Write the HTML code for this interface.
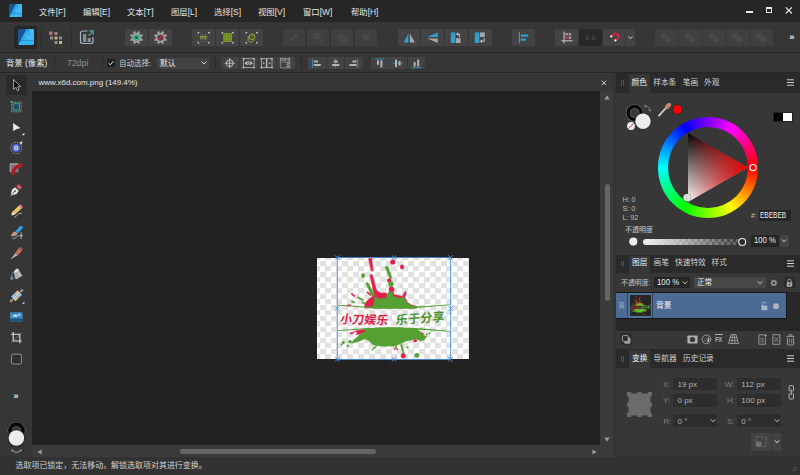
<!DOCTYPE html>
<html lang="zh">
<head>
<meta charset="utf-8">
<title>Affinity Designer</title>
<style>
*{box-sizing:border-box;margin:0;padding:0}
html,body{width:800px;height:475px;overflow:hidden;background:#363636;color:#d8d8d8;
font-family:"Liberation Sans","Noto Sans CJK SC",sans-serif;font-size:8.4px;line-height:1}
#app{position:relative;width:800px;height:475px;overflow:hidden;background:#363636}
#app div,#app span,#app svg{position:absolute}
.t{white-space:nowrap;line-height:12px;height:12px}
.btn{background:#434343;border-radius:1px}
.btnd{background:#3f3f3f;border-radius:1px}
.dark{background:#262626}
.field{background:#2b2b2b;border-radius:1px}
</style>
</head>
<body>
<div id="app">

<!-- title / menu bar -->
<div class="dark" style="left:0;top:0;width:800px;height:22px"></div>
<svg style="left:9px;top:4px" width="13" height="13" viewBox="0 0 16 16">
 <rect width="16" height="16" rx="0.8" fill="#1a5692"/>
 <path d="M0.3 16 L8.6 0 H15.2 A0.8 0.8 0 0 1 16 0.8 V15.2 A0.8 0.8 0 0 1 15.2 16 Z" fill="#36b6f4"/>
 <path d="M10.6 0 L4.6 11.6 M2.6 11.6 H16 M10.6 0.4 V7 M6.2 8.4 L9.2 12" stroke="#1c7cc6" stroke-width="0.8" fill="none"/>
 <path d="M4.6 11.6 L10.6 0 H16 V11.6 Z" fill="#5ccaff" opacity="0.25"/>
</svg>
<span class="t" style="left:39px;top:5.8px;color:#e4e4e4">文件[F]</span>
<span class="t" style="left:83px;top:5.8px;color:#e4e4e4">编辑[E]</span>
<span class="t" style="left:127px;top:5.8px;color:#e4e4e4">文本[T]</span>
<span class="t" style="left:171px;top:5.8px;color:#e4e4e4">图层[L]</span>
<span class="t" style="left:214px;top:5.8px;color:#e4e4e4">选择[S]</span>
<span class="t" style="left:258px;top:5.8px;color:#e4e4e4">视图[V]</span>
<span class="t" style="left:303px;top:5.8px;color:#e4e4e4">窗口[W]</span>
<span class="t" style="left:351px;top:5.8px;color:#e4e4e4">帮助[H]</span>
<!-- window controls -->
<div style="left:746px;top:11px;width:7px;height:2px;background:#e8e8e8"></div>
<div style="left:766px;top:7px;width:6px;height:6px;border:1px solid #e8e8e8;border-top-width:2px"></div>
<svg style="left:785px;top:7px" width="8" height="7" viewBox="0 0 8 7"><path d="M0.7 0.3 L7 6.5 M7 0.3 L0.7 6.5" stroke="#e8e8e8" stroke-width="1.1"/></svg>

<!-- main toolbar -->
<!-- persona buttons -->
<div style="left:14px;top:26px;width:23px;height:23px;background:#272727;border-radius:1px"></div>
<svg style="left:18px;top:29px" width="16" height="16" viewBox="0 0 16 16">
 <rect width="16" height="16" rx="1.4" fill="#1a5692"/>
 <path d="M0.3 16 L8.6 0 H14.6 A1.4 1.4 0 0 1 16 1.4 V14.6 A1.4 1.4 0 0 1 14.6 16 Z" fill="#36b6f4"/>
 <path d="M10.6 0 L4.6 11.6 M2.6 11.6 H16 M10.6 0.4 V7 M6.2 8.4 L9.2 12" stroke="#1c7cc6" stroke-width="0.75" fill="none"/>
 <path d="M4.6 11.6 L10.6 0 H16 V11.6 Z" fill="#5ccaff" opacity="0.25"/>
</svg>
<div style="left:41px;top:26px;width:1px;height:23px;background:#2b2b2b"></div>
<div style="left:71px;top:26px;width:1px;height:23px;background:#2b2b2b"></div>
<svg style="left:48.2px;top:29.8px" width="16" height="16" viewBox="0 0 16 16">
 <rect x="1" y="1.5" width="3.6" height="3.6" fill="#b06b6f"/>
 <rect x="6.5" y="2" width="3" height="3" fill="#8e8e8e"/>
 <rect x="2" y="6.5" width="3" height="3" fill="#8e8e8e"/>
 <rect x="6.5" y="6.5" width="3" height="3" fill="#c9b27c"/>
 <rect x="11" y="6.5" width="3" height="3" fill="#8e8e8e"/>
 <rect x="6.5" y="11" width="3" height="3" fill="#8e8e8e"/>
 <rect x="11" y="11" width="3" height="3" fill="#c9b27c"/>
</svg>
<svg style="left:79px;top:29px" width="16" height="16" viewBox="0 0 16 16">
 <path d="M8.5 2 H3.5 A2 2 0 0 0 1.5 4 V12.5 A2 2 0 0 0 3.5 14.5 H12 A2 2 0 0 0 14 12.5 V8" fill="none" stroke="#9fb4c8" stroke-width="1.2"/>
 <rect x="4" y="5" width="3.2" height="8" fill="#8f8f8f"/>
 <rect x="8.6" y="9" width="3.2" height="4" fill="#8f8f8f"/>
 <path d="M9.5 6.8 L14 2.3 M10.3 2 H14.3 V6" fill="none" stroke="#4f9c8c" stroke-width="1.3"/>
</svg>
<div class="btn" style="left:125px;top:29px;width:23px;height:17px"></div>
<div class="btn" style="left:149px;top:29px;width:23px;height:17px"></div>
<div class="btn" style="left:192px;top:29px;width:23px;height:17px"></div>
<div class="btn" style="left:216px;top:29px;width:23px;height:17px"></div>
<div class="btn" style="left:240px;top:29px;width:23px;height:17px"></div>
<div class="btnd" style="left:283px;top:29px;width:22px;height:17px"></div>
<div class="btnd" style="left:307px;top:29px;width:22px;height:17px"></div>
<div class="btnd" style="left:331px;top:29px;width:22px;height:17px"></div>
<div class="btnd" style="left:355px;top:29px;width:22px;height:17px"></div>
<div class="btn" style="left:397.5px;top:29px;width:22.5px;height:17px"></div>
<div class="btn" style="left:421.2px;top:29px;width:22.8px;height:17px"></div>
<div class="btn" style="left:445px;top:29px;width:22.8px;height:17px"></div>
<div class="btn" style="left:469px;top:29px;width:22.8px;height:17px"></div>
<div class="btn" style="left:512px;top:29px;width:23px;height:17px"></div>
<div class="btn" style="left:555px;top:29px;width:23px;height:17px"></div>
<div style="left:579px;top:29px;width:23px;height:17px;background:#282828;border-radius:1px"></div>
<div class="btn" style="left:602.5px;top:29px;width:22.5px;height:17px"></div>
<div class="btn" style="left:626px;top:29px;width:9px;height:17px"></div>
<div class="btnd" style="left:655px;top:29px;width:22.5px;height:17px"></div>
<div class="btnd" style="left:679px;top:29px;width:22.5px;height:17px"></div>
<div class="btnd" style="left:702.8px;top:29px;width:22.4px;height:17px"></div>
<div class="btnd" style="left:726.3px;top:29px;width:22.4px;height:17px"></div>
<div class="btnd" style="left:750.2px;top:29px;width:22.4px;height:17px"></div>

<!-- toolbar icons -->
<svg style="left:125px;top:29px" width="23" height="17" viewBox="0 0 23 17"><circle cx="11.5" cy="8.6" r="3.9" fill="none" stroke="#a2a2a2" stroke-width="1.9"/><circle cx="16.49" cy="10.67" r="1.25" fill="#a2a2a2"/><circle cx="13.57" cy="13.59" r="1.25" fill="#a2a2a2"/><circle cx="9.43" cy="13.59" r="1.25" fill="#a2a2a2"/><circle cx="6.51" cy="10.67" r="1.25" fill="#a2a2a2"/><circle cx="6.51" cy="6.53" r="1.25" fill="#a2a2a2"/><circle cx="9.43" cy="3.61" r="1.25" fill="#a2a2a2"/><circle cx="13.57" cy="3.61" r="1.25" fill="#a2a2a2"/><circle cx="16.49" cy="6.53" r="1.25" fill="#a2a2a2"/><circle cx="11.5" cy="8.6" r="2.2" fill="#434343" stroke="#27c483" stroke-width="1.5"/></svg>
<svg style="left:149px;top:29px" width="23" height="17" viewBox="0 0 23 17"><circle cx="11.5" cy="8.6" r="3.9" fill="none" stroke="#a2a2a2" stroke-width="1.9"/><circle cx="16.49" cy="10.67" r="1.25" fill="#a2a2a2"/><circle cx="13.57" cy="13.59" r="1.25" fill="#a2a2a2"/><circle cx="9.43" cy="13.59" r="1.25" fill="#a2a2a2"/><circle cx="6.51" cy="10.67" r="1.25" fill="#a2a2a2"/><circle cx="6.51" cy="6.53" r="1.25" fill="#a2a2a2"/><circle cx="9.43" cy="3.61" r="1.25" fill="#a2a2a2"/><circle cx="13.57" cy="3.61" r="1.25" fill="#a2a2a2"/><circle cx="16.49" cy="6.53" r="1.25" fill="#a2a2a2"/><circle cx="11.5" cy="8.6" r="2.9" fill="#434343"/><path d="M9 11.2 L14.1 6.1" stroke="#e0203f" stroke-width="1.6"/></svg>
<svg style="left:192px;top:29px" width="23" height="17" viewBox="0 0 23 17"><path d="M6 4.8 V3.5 H7.3 M16 3.5 H17.3 V4.8 M6 12.8 V14.1 H7.3 M16 14.1 H17.3 V12.8" fill="none" stroke="#e6e6e6" stroke-width="0.8"/><g stroke="#7c7c7c" stroke-width="0.55" stroke-dasharray="1 0.6"><path d="M8.2 5.6 H15.2"/><path d="M8.2 7.3 H15.2"/><path d="M8.2 9 H15.2"/><path d="M8.2 10.7 H15.2"/><path d="M8.2 12.4 H15.2"/></g><g stroke="#a8c832" stroke-width="1" stroke-dasharray="1.2 0.5"><path d="M8.2 7.3 H15.2"/><path d="M8.2 9 H15.2"/></g></svg>
<svg style="left:216px;top:29px" width="23" height="17" viewBox="0 0 23 17"><path d="M6 4.8 V3.5 H7.3 M16 3.5 H17.3 V4.8 M6 12.8 V14.1 H7.3 M16 14.1 H17.3 V12.8" fill="none" stroke="#e6e6e6" stroke-width="0.8"/><rect x="7.8" y="4.6" width="7.8" height="7.8" fill="#5f7224"/><g stroke="#9dbd30" stroke-width="0.6"><path d="M7.6 4.6 H15.8"/><path d="M7.6 7.2 H15.8"/><path d="M7.6 9.8 H15.8"/><path d="M7.6 12.4 H15.8"/><path d="M7.8 4.4 V12.6"/><path d="M10.4 4.4 V12.6"/><path d="M13 4.4 V12.6"/><path d="M15.6 4.4 V12.6"/></g></svg>
<svg style="left:240px;top:29px" width="23" height="17" viewBox="0 0 23 17"><path d="M6 4.8 V3.5 H7.3 M16 3.5 H17.3 V4.8 M6 12.8 V14.1 H7.3 M16 14.1 H17.3 V12.8" fill="none" stroke="#e6e6e6" stroke-width="0.8"/><path d="M8.2 7.8 L9.8 6.6 M8.2 7.8 V11.6 L9.4 12.8 H12.2 L13.6 11.6 V10.4" fill="none" stroke="#9dbd30" stroke-width="0.8"/><circle cx="12.2" cy="7.8" r="2.8" fill="none" stroke="#a8c832" stroke-width="0.8"/><path d="M12.2 6.4 V8 H13.4" fill="none" stroke="#9dbd30" stroke-width="0.6"/></svg>
<svg style="left:283px;top:29px" width="22" height="17" viewBox="0 0 22 17"><rect x="10.6" y="4.6" width="4.2" height="4.2" fill="#484848"/><rect x="7.6" y="8" width="4.2" height="4.2" fill="#484848"/></svg>
<svg style="left:307px;top:29px" width="22" height="17" viewBox="0 0 22 17"><rect x="6.5" y="4" width="6.5" height="6.5" fill="#484848"/><path d="M11 13.5 H16 V8.5 H14 V11.5 H11 Z" fill="#484848"/></svg>
<svg style="left:331px;top:29px" width="22" height="17" viewBox="0 0 22 17"><rect x="6.5" y="4" width="6.5" height="6.5" fill="#464646"/><rect x="9.5" y="6.8" width="7" height="7" fill="#484848"/></svg>
<svg style="left:355px;top:29px" width="22" height="17" viewBox="0 0 22 17"><rect x="8" y="5.5" width="6.5" height="6.5" fill="#484848"/></svg>
<svg style="left:397.5px;top:29px" width="22.5" height="17" viewBox="0 0 22.5 17"><path d="M10.4 4.5 V13.5 H5.6 Z" fill="#2f9fd0"/><path d="M11.8 4.5 V13.5 H17 Z" fill="#a6a6a6"/></svg>
<svg style="left:421.2px;top:29px" width="22.5" height="17" viewBox="0 0 22.5 17"><path d="M6.3 8 H16.8 V3.4 Z" fill="#2f9fd0"/><path d="M6.3 9.6 H16.8 V14 Z" fill="#a6a6a6"/></svg>
<svg style="left:445px;top:29px" width="22.5" height="17" viewBox="0 0 22.5 17"><rect x="5.8" y="3.4" width="4.6" height="10.6" fill="#2f9fd0"/><rect x="11" y="9.2" width="4.6" height="4.8" fill="#a6a6a6"/><path d="M11.8 5 H14.3 V8.2 M13 3.8 L11.6 5 L13 6.2" fill="none" stroke="#dcdcdc" stroke-width="0.9"/></svg>
<svg style="left:469px;top:29px" width="22.5" height="17" viewBox="0 0 22.5 17"><rect x="5.8" y="3.4" width="4.6" height="10.6" fill="#2f9fd0"/><rect x="11" y="3.4" width="4.8" height="4.6" fill="#a6a6a6"/><path d="M15.2 9.4 V12.2 H11.6 M13 10.9 L11.5 12.2 L13 13.5" fill="none" stroke="#dcdcdc" stroke-width="0.9"/></svg>
<svg style="left:512px;top:29px" width="23" height="17" viewBox="0 0 23 17"><path d="M7.3 3.2 V14.2" stroke="#9a9a9a" stroke-width="0.9"/><rect x="8.8" y="5.4" width="7.6" height="2.4" rx="0.6" fill="#2f9fd0"/><rect x="8.8" y="9.4" width="5" height="2.4" rx="0.6" fill="#2f9fd0"/></svg>
<svg style="left:555px;top:29px" width="23" height="17" viewBox="0 0 23 17"><path d="M9 2.6 V14.4 M6.4 11.8 H17.6" stroke="#d8d8d8" stroke-width="0.9"/><rect x="10.2" y="4" width="2.6" height="2.4" fill="#9a9a9a"/><rect x="13.6" y="4" width="2.6" height="2.4" fill="#9a9a9a"/><rect x="13.6" y="7.4" width="2.6" height="2.6" fill="#9a9a9a"/><rect x="10" y="7.2" width="3" height="3" fill="#e0203f"/></svg>
<svg style="left:579px;top:29px" width="23" height="17" viewBox="0 0 23 17"><rect x="6.4" y="6.4" width="4" height="4.6" fill="#3a3a3a"/><path d="M12 6.4 H16.4 V11 H12 L13.6 8.7 Z" fill="#3a3a3a"/></svg>
<svg style="left:602.5px;top:29px" width="22.5" height="17" viewBox="0 0 22.5 17"><path d="M8.6 7.6 L10.6 5.4 A2.9 2.9 0 0 1 14.7 9.5 L12.6 11.6" fill="none" stroke="#e0203f" stroke-width="2"/><path d="M7.5 6.6 L9 8.1" stroke="#f0f0f0" stroke-width="1.7"/><path d="M11.6 10.7 L13.1 12.2" stroke="#f0f0f0" stroke-width="1.7"/></svg>
<svg style="left:626px;top:29px" width="9" height="17" viewBox="0 0 9 17"><path d="M2.4 7.6 L4.5 9.6 L6.6 7.6" fill="none" stroke="#d8d8d8" stroke-width="1"/></svg>
<svg style="left:655px;top:29px" width="22.5" height="17" viewBox="0 0 22.5 17"><rect x="6" y="4" width="6" height="6" fill="#484848"/><circle cx="13.2" cy="10.4" r="3.4" fill="#484848"/></svg>
<svg style="left:679px;top:29px" width="22.5" height="17" viewBox="0 0 22.5 17"><rect x="6" y="4" width="6" height="6" fill="#484848"/><circle cx="13.2" cy="10.4" r="3.4" fill="#484848"/></svg>
<svg style="left:702.8px;top:29px" width="22.5" height="17" viewBox="0 0 22.5 17"><rect x="6" y="4" width="6" height="6" fill="#484848"/><circle cx="13.2" cy="10.4" r="3.4" fill="#484848"/></svg>
<svg style="left:726.3px;top:29px" width="22.5" height="17" viewBox="0 0 22.5 17"><rect x="6" y="4" width="6" height="6" fill="#484848"/><circle cx="13.2" cy="10.4" r="3.4" fill="#484848"/></svg>
<svg style="left:750.2px;top:29px" width="22.5" height="17" viewBox="0 0 22.5 17"><rect x="6" y="4" width="6" height="6" fill="#484848"/><circle cx="13.2" cy="10.4" r="3.4" fill="#484848"/></svg>
<span class="t" style="left:789.3px;top:31.4px;font-size:9.5px;color:#eaeaea;font-weight:bold">»</span>
<div style="left:0;top:52px;width:800px;height:1px;background:#262626"></div>

<!-- context toolbar -->
<span class="t" style="left:6px;top:56.7px;color:#e6e6e6">背景 (像素)</span>
<div style="left:54px;top:55px;width:1px;height:15px;background:#2a2a2a"></div>
<span class="t" style="left:67px;top:56.7px;color:#8c8c8c;font-size:8.8px">72dpi</span>
<div style="left:102px;top:55px;width:1px;height:15px;background:#2a2a2a"></div>
<div style="left:107px;top:59px;width:8px;height:8px;background:#1f1f1f;border-radius:1px"></div>
<svg style="left:107px;top:59px" width="8" height="8" viewBox="0 0 8 8"><path d="M1.6 4.2 L3.3 5.8 L6.4 2.2" fill="none" stroke="#e8e8e8" stroke-width="1"/></svg>
<span class="t" style="left:119px;top:57.6px;color:#c8c8c8;font-size:7.5px">自动选择:</span>
<div class="btn" style="left:157px;top:57.5px;width:52px;height:11px"></div>
<span class="t" style="left:160px;top:57.6px;color:#eaeaea;font-size:7.8px">默认</span>
<svg style="left:200px;top:60px" width="8" height="6" viewBox="0 0 8 6"><path d="M1.6 1.6 L4 3.9 L6.4 1.6" fill="none" stroke="#d8d8d8" stroke-width="1"/></svg>
<div style="left:214.5px;top:55px;width:1px;height:15px;background:#2a2a2a"></div>
<div style="left:301px;top:55px;width:1px;height:15px;background:#2a2a2a"></div>
<div class="btn" style="left:221.3px;top:56.5px;width:17.5px;height:12.5px"></div>
<div class="btn" style="left:240px;top:56.5px;width:17.5px;height:12.5px"></div>
<div class="btn" style="left:258.5px;top:56.5px;width:17.5px;height:12.5px"></div>
<div class="btn" style="left:277px;top:56.5px;width:17.5px;height:12.5px"></div>
<div class="btn" style="left:308.3px;top:56.5px;width:17.5px;height:12.5px"></div>
<div class="btn" style="left:326.8px;top:56.5px;width:17.5px;height:12.5px"></div>
<div class="btn" style="left:345.2px;top:56.5px;width:17.5px;height:12.5px"></div>
<div class="btn" style="left:371px;top:56.5px;width:17.5px;height:12.5px"></div>
<div class="btn" style="left:389.4px;top:56.5px;width:17.5px;height:12.5px"></div>
<div class="btn" style="left:407.8px;top:56.5px;width:17.5px;height:12.5px"></div>
<svg style="left:221.3px;top:56.5px" width="17.5" height="12.5" viewBox="0 0 17.5 12.5"><circle cx="8.7" cy="6.2" r="3.4" fill="none" stroke="#d4d4d4" stroke-width="0.8"/><path d="M8.7 1.2 V11.2 M3.7 6.2 H13.7" stroke="#d4d4d4" stroke-width="0.8"/></svg>
<svg style="left:240px;top:56.5px" width="17.5" height="12.5" viewBox="0 0 17.5 12.5"><rect x="3.4" y="1.8" width="10.6" height="8.8" fill="none" stroke="#d4d4d4" stroke-width="0.6"/><rect x="2.7" y="1.1" width="1.4" height="1.4" fill="#d4d4d4"/><rect x="13.3" y="1.1" width="1.4" height="1.4" fill="#d4d4d4"/><rect x="2.7" y="9.9" width="1.4" height="1.4" fill="#d4d4d4"/><rect x="13.3" y="9.9" width="1.4" height="1.4" fill="#d4d4d4"/><path d="M4.6 6.2 Q8.7 2.4 12.8 6.2 Q8.7 10 4.6 6.2 Z" fill="#d4d4d4"/><circle cx="8.7" cy="6.2" r="1.5" fill="#434343"/><circle cx="8.7" cy="6.2" r="0.7" fill="#d4d4d4"/></svg>
<svg style="left:257.9px;top:56.5px" width="17.5" height="12.5" viewBox="0 0 17.5 12.5"><rect x="3.4" y="1.8" width="10.6" height="8.8" fill="none" stroke="#d4d4d4" stroke-width="0.6"/><rect x="2.7" y="1.1" width="1.4" height="1.4" fill="#d4d4d4"/><rect x="13.3" y="1.1" width="1.4" height="1.4" fill="#d4d4d4"/><rect x="2.7" y="9.9" width="1.4" height="1.4" fill="#d4d4d4"/><rect x="13.3" y="9.9" width="1.4" height="1.4" fill="#d4d4d4"/><path d="M8.7 1.8 V10.6" stroke="#d4d4d4" stroke-width="1.1"/><path d="M6.8 6.2 L5.2 5.2 V7.2 Z M10.6 6.2 L12.2 5.2 V7.2 Z" fill="#d4d4d4"/></svg>
<svg style="left:277px;top:56.5px" width="17.5" height="12.5" viewBox="0 0 17.5 12.5"><rect x="3.6" y="5" width="6.4" height="6" fill="none" stroke="#d4d4d4" stroke-width="0.7" stroke-dasharray="1.2 0.9"/><rect x="3.2" y="1.2000000000000002" width="2" height="2" fill="none" stroke="#d4d4d4" stroke-width="0.55"/><rect x="7" y="1.2000000000000002" width="2" height="2" fill="none" stroke="#d4d4d4" stroke-width="0.55"/><rect x="10.9" y="1.2000000000000002" width="2" height="2" fill="none" stroke="#d4d4d4" stroke-width="0.55"/><rect x="10.9" y="5" width="2" height="2" fill="none" stroke="#d4d4d4" stroke-width="0.55"/><rect x="10.9" y="8.8" width="2" height="2" fill="none" stroke="#d4d4d4" stroke-width="0.55"/></svg>
<svg style="left:308.3px;top:56.5px" width="17.5" height="12.5" viewBox="0 0 17.5 12.5"><path d="M4.6 1.6 V11" stroke="#2f9fd0" stroke-width="0.8"/><rect x="5.8" y="3.4" width="4.2" height="2" rx="0.5" fill="#b4b4b4"/><rect x="5.8" y="7" width="7" height="2" rx="0.5" fill="#b4b4b4"/></svg>
<svg style="left:326.8px;top:56.5px" width="17.5" height="12.5" viewBox="0 0 17.5 12.5"><path d="M8.7 1.6 V11" stroke="#2f9fd0" stroke-width="0.8"/><rect x="6.6" y="3.4" width="4.2" height="2" rx="0.5" fill="#b4b4b4"/><rect x="5" y="7" width="7.4" height="2" rx="0.5" fill="#b4b4b4"/></svg>
<svg style="left:345.2px;top:56.5px" width="17.5" height="12.5" viewBox="0 0 17.5 12.5"><path d="M12.6 1.6 V11" stroke="#2f9fd0" stroke-width="0.8"/><rect x="7.4" y="3.4" width="4.2" height="2" rx="0.5" fill="#b4b4b4"/><rect x="4.4" y="7" width="7.2" height="2" rx="0.5" fill="#b4b4b4"/></svg>
<svg style="left:371px;top:56.5px" width="17.5" height="12.5" viewBox="0 0 17.5 12.5"><path d="M4.2 2 H13.4" stroke="#2f9fd0" stroke-width="0.8"/><rect x="6" y="3.2" width="2" height="4.6" rx="0.5" fill="#b4b4b4"/><rect x="9.4" y="3.2" width="2" height="7.2" rx="0.5" fill="#b4b4b4"/></svg>
<svg style="left:389.4px;top:56.5px" width="17.5" height="12.5" viewBox="0 0 17.5 12.5"><path d="M3.6 6.2 H13.8" stroke="#2f9fd0" stroke-width="0.8"/><rect x="6" y="2.6" width="2" height="7.4" rx="0.5" fill="#b4b4b4"/><rect x="9.6" y="4" width="2" height="4.4" rx="0.5" fill="#b4b4b4"/></svg>
<svg style="left:407.8px;top:56.5px" width="17.5" height="12.5" viewBox="0 0 17.5 12.5"><path d="M3.8 10.6 H13.4" stroke="#2f9fd0" stroke-width="0.8"/><rect x="5.6" y="5" width="2" height="4.6" rx="0.5" fill="#b4b4b4"/><rect x="9.2" y="2.4" width="2" height="7.2" rx="0.5" fill="#b4b4b4"/></svg>
<div style="left:0;top:72px;width:800px;height:1px;background:#262626"></div>


<!-- document area -->
<div style="left:32px;top:73px;width:580.5px;height:18px;background:#363636"></div>
<span class="t" style="left:38.6px;top:76.7px;color:#e2e2e2;font-size:8px;letter-spacing:-0.03px">www.x6d.com.png (149.4%)</span>
<svg style="left:601px;top:79.5px" width="6" height="6" viewBox="0 0 6 6"><path d="M0.6 0.6 L5.2 5.2 M5.2 0.6 L0.6 5.2" stroke="#e0e0e0" stroke-width="0.9"/></svg>
<div style="left:32px;top:91px;width:568px;height:354px;background:#222222"></div>

<!-- canvas image -->
<div style="left:317.2px;top:257.8px;width:151.9px;height:101.7px;background:#fff repeating-conic-gradient(#e1e1e1 0% 25%,#ffffff 0% 50%) 3.1px 8.1px/11px 11px"></div>
<svg style="left:317px;top:254px" width="153" height="110" viewBox="317 254 153 110">

<g id="splat">
<path d="M368.5 258.8 L370.0 258.1 L371.8 258.6 L373.0 270.6 L372.1 271.5 L371.2 270.6 Z" fill="#e1204b" stroke="#e1204b" stroke-width="0.5" stroke-linejoin="round"/>
<path d="M370.0 275.1 L371.2 274.2 L372.4 274.9 L376.0 288.6 L377.2 291.6 L374.8 294.6 L373.3 291.0 Z" fill="#e1204b" stroke="#e1204b" stroke-width="0.5" stroke-linejoin="round"/>
<path d="M374.2 291.6 L377.2 291.0 L380.8 293.1 L386.2 293.1 L387.7 295.2 L389.4 291.0 L392.8 291.0 L394.0 294.6 L397.6 295.2 L402.4 296.4 L404.1 293.1 L405.7 291.0 L406.2 294.6 L404.7 297.0 L407.4 302.4 L411.9 305.1 L416.7 306.3 L416.7 307.8 L364.6 307.8 L364.9 304.2 L366.6 301.2 L370.0 298.2 L372.4 296.4 Z" fill="#e1204b" stroke="#e1204b" stroke-width="0.5" stroke-linejoin="round"/>
<ellipse cx="392.8" cy="262.0" rx="2.6" ry="2.6" fill="#e1204b"/>
<ellipse cx="402.0" cy="267.0" rx="2.0" ry="2.4" fill="#e1204b"/>
<ellipse cx="389.2" cy="280.4" rx="2.2" ry="2.2" fill="#e1204b"/>
<ellipse cx="391.6" cy="289.2" rx="2.8" ry="2.6" fill="#e1204b"/>
<path d="M351.0 294.0 L352.0 293.4 L355.0 295.8 L354.1 296.7 Z" fill="#e1204b" stroke="#e1204b" stroke-width="0.5" stroke-linejoin="round"/>
<path d="M366.6 292.4 L367.6 291.6 L371.4 294.8 L370.6 295.8 Z" fill="#e1204b" stroke="#e1204b" stroke-width="0.5" stroke-linejoin="round"/>
<path d="M347.4 304.8 L350.8 304.8 L351.0 306.0 L347.7 306.1 Z" fill="#e1204b" stroke="#e1204b" stroke-width="0.5" stroke-linejoin="round"/>
<path d="M385.1 267.0 L386.8 266.0 L388.2 267.0 L391.8 277.8 L391.0 279.0 L389.8 278.5 Z" fill="#55a033" stroke="#55a033" stroke-width="0.5" stroke-linejoin="round"/>
<ellipse cx="363.0" cy="275.4" rx="1.9" ry="2.5" fill="#55a033"/>
<path d="M365.8 283.2 L367.0 282.3 L368.2 283.2 L374.8 295.2 L373.0 296.4 L371.4 295.2 Z" fill="#55a033" stroke="#55a033" stroke-width="0.5" stroke-linejoin="round"/>
<ellipse cx="391.0" cy="284.1" rx="2.6" ry="2.8" fill="#55a033"/>
<path d="M374.8 296.7 L379.6 298.9 L386.2 298.2 L387.0 294.6 L388.6 292.4 L390.4 291.7 L392.3 292.4 L393.0 296.4 L400.0 298.2 L403.5 297.0 L407.1 303.0 L411.3 305.4 L416.7 306.8 L416.7 308.4 L371.4 308.4 L374.2 303.0 Z" fill="#55a033" stroke="#55a033" stroke-width="0.5" stroke-linejoin="round"/>
<path d="M357.0 297.6 L358.0 296.7 L363.7 299.6 L362.8 300.8 Z" fill="#55a033" stroke="#55a033" stroke-width="0.5" stroke-linejoin="round"/>
<path d="M351.0 301.5 L352.0 300.8 L355.0 302.0 L354.1 303.2 Z" fill="#55a033" stroke="#55a033" stroke-width="0.5" stroke-linejoin="round"/>
<path d="M361.6 302.7 L362.8 302.0 L365.8 303.2 L365.2 304.4 Z" fill="#55a033" stroke="#55a033" stroke-width="0.5" stroke-linejoin="round"/>
<path d="M365.7 328.6 L380.0 327.7 L398.0 327.5 L416.0 328.6 L421.2 332.5 L425.0 336.2 L424.7 339.7 L420.5 340.7 L416.0 339.2 L407.0 340.7 L398.7 344.5 L395.0 346.0 L384.5 346.3 L377.0 345.7 L372.5 344.5 L369.2 340.7 L365.0 338.8 L359.0 341.2 L351.5 343.3 L353.0 340.7 L357.5 337.0 L362.0 332.5 Z" fill="#55a033" stroke="#55a033" stroke-width="0.5" stroke-linejoin="round"/>
<path d="M400.4 344.5 L401.9 344.2 L404.3 353.2 L403.1 353.5 Z" fill="#55a033" stroke="#55a033" stroke-width="0.5" stroke-linejoin="round"/>
<path d="M375.8 346.0 L376.7 346.9 L372.2 350.2 L371.6 349.6 Z" fill="#55a033" stroke="#55a033" stroke-width="0.5" stroke-linejoin="round"/>
<path d="M395.7 346.0 L396.8 346.0 L396.2 349.0 L395.3 349.0 Z" fill="#55a033" stroke="#55a033" stroke-width="0.5" stroke-linejoin="round"/>
<ellipse cx="343.2" cy="342.5" rx="1.6" ry="1.5" fill="#55a033"/>
<ellipse cx="347.7" cy="346.0" rx="1.2" ry="1.2" fill="#55a033"/>
<ellipse cx="350.0" cy="341.5" rx="1.9" ry="1.6" fill="#55a033"/>
<ellipse cx="341.7" cy="344.5" rx="1.0" ry="1.0" fill="#55a033"/>
<ellipse cx="407.7" cy="347.5" rx="1.0" ry="1.0" fill="#55a033"/>
<ellipse cx="416.9" cy="355.3" rx="2.4" ry="2.2" fill="#55a033"/>
<ellipse cx="425.4" cy="337.0" rx="1.2" ry="1.2" fill="#55a033"/>
<ellipse cx="429.5" cy="333.2" rx="1.0" ry="0.9" fill="#55a033"/>
<ellipse cx="426.8" cy="334.4" rx="0.9" ry="0.9" fill="#55a033"/>
<path d="M354.5 331.3 L364.2 329.2 L365.0 331.3 L359.7 334.0 L356.0 334.7 L357.5 332.5 Z" fill="#e1204b" stroke="#e1204b" stroke-width="0.5" stroke-linejoin="round"/>
<path d="M350.0 332.8 L353.7 331.9 L354.0 333.1 L350.4 334.0 Z" fill="#e1204b" stroke="#e1204b" stroke-width="0.5" stroke-linejoin="round"/>
<ellipse cx="403.2" cy="355.7" rx="2.5" ry="2.5" fill="#e1204b"/>
<ellipse cx="415.2" cy="340.7" rx="1.8" ry="1.5" fill="#e1204b"/>
<ellipse cx="397.2" cy="349.3" rx="0.9" ry="1.0" fill="#e1204b"/>
<ellipse cx="422.7" cy="333.4" rx="1.0" ry="0.9" fill="#e1204b"/>
<ellipse cx="394.2" cy="349.0" rx="0.6" ry="1.2" fill="#e1204b"/>
<path d="M337 304.8 Q394 309.8 451 304.2 L451 304.9 Q394 311.4 337 305.5 Z" fill="#55a033"/>
<path d="M337 330.2 Q394 324.6 451 331 L451 331.7 Q394 326.8 337 330.9 Z" fill="#55a033"/>
</g>
<text x="0" y="0" font-family="'Liberation Sans','Noto Sans CJK SC',sans-serif" font-weight="700" font-size="11.8" fill="#dc2348" transform="translate(339.8 323.2) rotate(1.5) skewX(-8)" style="letter-spacing:0.2px">小刀娱乐</text>
<text x="0" y="0" font-family="'Liberation Sans','Noto Sans CJK SC',sans-serif" font-weight="700" font-size="12" fill="#4c922d" transform="translate(395.6 324.6) rotate(-4.6) skewX(-8)" style="letter-spacing:0.3px">乐于分享</text>

<rect x="337.3" y="257.6" width="113.3" height="101.8" fill="none" stroke="#4f94e6" stroke-width="0.9"/>
<g stroke="#4f94e6" stroke-width="0.9" fill="none">
<path d="M335.0 255.3 L339.6 259.90000000000003 M339.6 255.3 L335.0 259.90000000000003"/><path d="M391.7 255.3 L396.3 259.90000000000003 M396.3 255.3 L391.7 259.90000000000003"/><path d="M448.3 255.3 L452.90000000000003 259.90000000000003 M452.90000000000003 255.3 L448.3 259.90000000000003"/><path d="M335.0 306.2 L339.6 310.8 M339.6 306.2 L335.0 310.8"/><path d="M448.3 306.2 L452.90000000000003 310.8 M452.90000000000003 306.2 L448.3 310.8"/><path d="M335.0 357.09999999999997 L339.6 361.7 M339.6 357.09999999999997 L335.0 361.7"/><path d="M391.7 357.09999999999997 L396.3 361.7 M396.3 357.09999999999997 L391.7 361.7"/><path d="M448.3 357.09999999999997 L452.90000000000003 361.7 M452.90000000000003 357.09999999999997 L448.3 361.7"/></g>
</svg>
<!-- v scrollbar -->
<div style="left:600px;top:91px;width:13px;height:354px;background:#3b3b3b"></div>
<svg style="left:604px;top:95.4px" width="6" height="5" viewBox="0 0 6 5"><path d="M3 0.3 L5.6 4.6 H0.4 Z" fill="#9a9a9a"/></svg>
<svg style="left:604px;top:436.5px" width="6" height="5" viewBox="0 0 6 5"><path d="M3 4.7 L5.6 0.4 H0.4 Z" fill="#9a9a9a"/></svg>
<div style="left:604.5px;top:184px;width:5px;height:117px;border-radius:2.5px;background:#666"></div>
<!-- h scrollbar -->
<div style="left:32px;top:445px;width:581px;height:12px;background:#3b3b3b"></div>
<svg style="left:36.5px;top:448.5px" width="5" height="6" viewBox="0 0 5 6"><path d="M0.3 3 L4.6 0.4 V5.6 Z" fill="#9a9a9a"/></svg>
<svg style="left:592px;top:448.5px" width="5" height="6" viewBox="0 0 5 6"><path d="M4.7 3 L0.4 0.4 V5.6 Z" fill="#9a9a9a"/></svg>
<div style="left:180px;top:449px;width:196px;height:5px;border-radius:2.5px;background:#666"></div>
<div style="left:613px;top:73px;width:3px;height:384px;background:#343434"></div>

<!-- left tools -->
<div style="left:0;top:457px;width:800px;height:18px;background:#323232"></div>
<div style="left:6px;top:75px;width:20.5px;height:19.5px;background:#2a2a2a;border-radius:1.5px"></div>
<svg style="left:6.0px;top:75.0px" width="20" height="20" viewBox="0 0 20 20"><path d="M7.6 4.4 V14.4 L9.9 12.3 L11.5 15.8 L13.2 15 L11.6 11.7 H14.6 Z" fill="#0c0c0c" stroke="#c4c4c4" stroke-width="0.8" stroke-linejoin="round"/></svg>
<svg style="left:6.0px;top:96.5px" width="20" height="20" viewBox="0 0 20 20"><rect x="5.6" y="5" width="9.6" height="9.8" fill="none" stroke="#dcdcdc" stroke-width="0.6" stroke-dasharray="1 0.8"/><rect x="7.2" y="6.7" width="6.2" height="6.4" fill="#1f4e6a" stroke="#2dbe9a" stroke-width="0.9"/><path d="M4.2 5 H7 M5.4 3.8 V5" stroke="#2dbe9a" stroke-width="0.9"/></svg>
<svg style="left:6.0px;top:118.0px" width="20" height="20" viewBox="0 0 20 20"><path d="M7.4 5.6 L13.8 9.9 L10 11 L7.4 12.7 Z" fill="#ececec" stroke="#ececec" stroke-width="0.6" stroke-linejoin="round"/><path d="M18.4 17.2 V14.6 L15.8 17.2 Z" fill="#dcdcdc"/></svg>
<svg style="left:6.0px;top:138.3px" width="20" height="20" viewBox="0 0 20 20"><circle cx="10.2" cy="10" r="5.6" fill="none" stroke="#d6d6e6" stroke-width="0.8" stroke-dasharray="0.9 1"/><circle cx="10.2" cy="10" r="3.1" fill="#d0d0d0" stroke="#5468ea" stroke-width="1.8"/><circle cx="10.2" cy="10" r="1.1" fill="#8a8a8a"/><path d="M13.4 4.6 L16.6 3.2 L15.6 6.8 Z" fill="#e6e6e6"/></svg>
<svg style="left:6.0px;top:158.5px" width="20" height="20" viewBox="0 0 20 20"><rect x="4.2" y="4.8" width="8.4" height="8.6" fill="#787878"/><path d="M4.2 13.4 V4.8 H12.6" fill="none" stroke="#d8d8d8" stroke-width="0.7"/><path d="M6.6 15.6 A9.6 9.6 0 0 1 16.2 6.2" fill="none" stroke="#c8242c" stroke-width="3.6"/><path d="M6.6 15.6 A9.6 9.6 0 0 1 16.2 6.2" fill="none" stroke="#a4181f" stroke-width="2"/></svg>
<svg style="left:6.0px;top:180.0px" width="20" height="20" viewBox="0 0 20 20"><path d="M4.6 15.8 L6 9.6 L9.2 7.2 L12.8 10.8 L10.6 14 Z" fill="#e4e4e4"/><path d="M4.8 15.6 L8.8 11.4" stroke="#444" stroke-width="0.8"/><circle cx="9" cy="11.2" r="0.9" fill="#444"/><path d="M10.2 6.4 L12.6 4 L16 7.4 L13.6 9.8 Z" fill="#e0506a"/></svg>
<svg style="left:6.0px;top:201.5px" width="20" height="20" viewBox="0 0 20 20"><path d="M5.2 13.4 L6.4 9.8 L13 3.4 L15.8 6.2 L9 12.6 Z" fill="#e6c468"/><path d="M5.2 13.4 L6.4 9.8 L9 12.6 Z" fill="#f0e2c4"/><path d="M5.2 13.4 L5.7 12 L6.6 12.9 Z" fill="#555"/><path d="M13 3.4 L14.2 2.2 L17 5 L15.8 6.2 Z" fill="#ea7a98"/><path d="M8 15 Q9.6 15.6 10.8 13.4 Q12.4 10.8 16 11.2" fill="none" stroke="#cfcfcf" stroke-width="0.7"/></svg>
<svg style="left:6.0px;top:223.0px" width="20" height="20" viewBox="0 0 20 20"><path d="M9.6 8.2 L13.4 3.4 Q15 2 16.4 3.2 Q17.6 4.6 16.2 6 L11.8 10.4 Z" fill="#2a9fe2"/><path d="M5 13.2 Q5.8 9.2 9.4 8.4 L11.6 10.6 Q10.6 14 5 13.2 Z" fill="#c99488"/><path d="M6.4 15.2 Q9 16.2 10.6 14 Q11.6 12.6 13.6 12.8" fill="none" stroke="#cfcfcf" stroke-width="0.7"/><path d="M15.2 9.4 V15.8 M13.8 12.6 H16.6" stroke="#dcdcdc" stroke-width="0.8"/></svg>
<svg style="left:6.0px;top:243.0px" width="20" height="20" viewBox="0 0 20 20"><path d="M4.4 16.4 L9.4 10 L11.6 12.2 L7 15 Z" fill="#b4b4b4"/><path d="M9.2 9.8 L13 5 Q14.6 3.6 16 4.8 Q17.2 6.2 15.8 7.8 L11.8 12.4 Z" fill="#c46e5a"/><circle cx="14.6" cy="6.2" r="0.9" fill="#8a4a3c"/></svg>
<svg style="left:6.0px;top:264.6px" width="20" height="20" viewBox="0 0 20 20"><path d="M8 7.2 L12.6 4.6 L16.4 10.8 L11.2 14 Q9.6 14.6 8.8 13 Z" fill="#adadad"/><ellipse cx="10.3" cy="5.9" rx="2.7" ry="1.3" transform="rotate(-30 10.3 5.9)" fill="#e4e4e4"/><path d="M12.4 8 L14.6 11" stroke="#dedede" stroke-width="1"/><path d="M9.6 4.4 Q11.8 2.6 12.8 5.2" fill="none" stroke="#cfcfcf" stroke-width="0.7"/><path d="M7.6 7 Q5.4 9 5.8 12.4" fill="none" stroke="#3f8fd6" stroke-width="1.3" stroke-dasharray="1.4 0.8"/><circle cx="5.8" cy="13.4" r="1.1" fill="none" stroke="#d8d8d8" stroke-width="0.6"/></svg>
<svg style="left:6.0px;top:285.0px" width="20" height="20" viewBox="0 0 20 20"><g transform="translate(10.5 10.7) rotate(-45)"><rect x="-4.6" y="-3.2" width="4.6" height="3.2" fill="#8ec0ea"/><rect x="0" y="-3.2" width="4.6" height="3.2" fill="#dcba8a"/><rect x="-4.6" y="0" width="4.6" height="3.2" fill="#dcba8a"/><rect x="0" y="0" width="4.6" height="3.2" fill="#8ec0ea"/><path d="M-7 0 H7" stroke="#e8e8e8" stroke-width="0.8"/><circle cx="-7.4" cy="0" r="1" fill="#4a4a4a" stroke="#e8e8e8" stroke-width="0.6"/><circle cx="7.4" cy="0" r="1" fill="#4a4a4a" stroke="#e8e8e8" stroke-width="0.6"/></g><path d="M18.4 18.8 V16.4 L16 18.8 Z" fill="#dcdcdc"/></svg>
<svg style="left:6.0px;top:306.6px" width="20" height="20" viewBox="0 0 20 20"><rect x="4" y="5.3" width="12.6" height="9.2" rx="0.8" fill="#3b8ac6"/><path d="M4 11.4 H16.6 V13.7 A0.8 0.8 0 0 1 15.8 14.5 H4.8 A0.8 0.8 0 0 1 4 13.7 Z" fill="#1e5878"/><path d="M4 11.6 Q7 10.4 10.3 11.4 T16.6 11.2 V12 H4 Z" fill="#2a7094"/><path d="M6.2 9.6 Q6.4 8.2 7.8 8.4 Q8.6 7 10 7.8 Q11.6 7.8 11.8 9.6 Z" fill="#f0f4f8"/><path d="M13.2 6.6 V9 M12 7.8 H14.4" stroke="#f0f4f8" stroke-width="0.7"/></svg>
<svg style="left:6.0px;top:328.0px" width="20" height="20" viewBox="0 0 20 20"><path d="M7.2 4 V13 H15.8 M5.2 6.2 H13.8 V15.2" fill="none" stroke="#e0e0e0" stroke-width="1.1"/><path d="M5.4 14.8 L15.6 4.6" stroke="#b4b4b4" stroke-width="0.5"/></svg>
<svg style="left:6.0px;top:349.0px" width="20" height="20" viewBox="0 0 20 20"><rect x="5.6" y="5.2" width="9.8" height="9.8" rx="1" fill="#2c3030" stroke="#a4a4a4" stroke-width="0.8"/></svg>
<span class="t" style="left:13.4px;top:390.2px;font-size:9px;color:#ececec;font-weight:bold">»</span>
<svg style="left:5px;top:416px" width="24" height="42" viewBox="0 0 24 42">
<circle cx="11.5" cy="15" r="9" fill="#6a6a6a"/>
<circle cx="11.5" cy="15" r="8.4" fill="#060606"/>
<circle cx="11.5" cy="15" r="4.8" fill="#6a6a6a"/>
<circle cx="11.5" cy="15" r="4.3" fill="#3a3a3a"/>
<circle cx="11.4" cy="22" r="8.8" fill="#222"/>
<circle cx="11.4" cy="22" r="7.8" fill="#ececec"/>
<path d="M7 34.2 Q11.5 38.6 16 34.2" fill="none" stroke="#c8c8c8" stroke-width="0.8"/>
<path d="M6.4 35.4 L6.9 33.8 L8.3 34.6 M16.6 35.4 L16.1 33.8 L14.7 34.6" fill="none" stroke="#c8c8c8" stroke-width="0.6"/>
</svg>

<!-- right panels -->
<div style="left:616px;top:73px;width:184px;height:384px;background:#373737"></div>
<div style="left:616px;top:73px;width:184px;height:19.5px;background:#2a2a2a"></div>
<div style="left:628.5px;top:74px;width:21.5px;height:18.5px;background:#373737"></div>
<div style="left:620.6px;top:79.95px;width:1.3px;height:5.6px;background:#525252"></div><div style="left:622.6px;top:79.95px;width:1.3px;height:5.6px;background:#525252"></div>
<span class="t" style="left:631.5px;top:76.55px;font-size:7.7px;color:#f2f2f2">颜色</span>
<span class="t" style="left:653.2px;top:76.55px;font-size:7.7px;color:#cfcfcf">样本条</span>
<span class="t" style="left:682.8px;top:76.55px;font-size:7.7px;color:#cfcfcf">笔画</span>
<span class="t" style="left:704px;top:76.55px;font-size:7.7px;color:#cfcfcf">外观</span>
<svg style="left:787px;top:79.15px" width="7" height="7" viewBox="0 0 7 7"><path d="M0 0.8 H7 M0 3.5 H7 M0 6.2 H7" stroke="#d0d0d0" stroke-width="1"/></svg>
<svg style="left:622px;top:100px" width="64" height="34" viewBox="622 100 64 34">
<circle cx="634.6" cy="113" r="8.8" fill="#777"/>
<circle cx="634.6" cy="113" r="8.2" fill="#050505"/>
<circle cx="634.6" cy="113" r="4.8" fill="#777"/>
<circle cx="634.6" cy="113" r="4.3" fill="#373737"/>
<circle cx="643" cy="121.3" r="8.4" fill="#2a2a2a"/>
<circle cx="643" cy="121.3" r="7.7" fill="#ebebeb"/>
<circle cx="631" cy="126" r="3.9" fill="#f0f0f0"/>
<path d="M628.6 128.6 L633.6 123.4" stroke="#e0304a" stroke-width="1"/>
<path d="M644.6 106 Q649.4 106 650 111" fill="none" stroke="#a0a0a0" stroke-width="0.7"/>
<path d="M645.8 104.8 L644.4 106 L645.8 107.4 M648.8 109.8 L650 111.2 L651.2 109.8" fill="none" stroke="#a0a0a0" stroke-width="0.7"/>
<path d="M659 115.6 L666.4 107.4" stroke="#c4c4c4" stroke-width="2" stroke-linecap="round"/>
<ellipse cx="668" cy="106" rx="3.6" ry="2.2" transform="rotate(-47 668 106)" fill="#c98773"/>
<circle cx="677.4" cy="109.3" r="5.3" fill="#2a2a2a"/>
<circle cx="677.4" cy="109.3" r="4.4" fill="#ff0000"/>
</svg>
<div style="left:773px;top:112px;width:19.5px;height:10px;background:#000;border:0.5px solid #222"></div>
<div style="left:783px;top:112.7px;width:9px;height:8.6px;background:#fff"></div>
<div style="left:657.5px;top:117.2px;width:100.6px;height:100.6px;border-radius:50%;background:conic-gradient(from 90deg,#ff0000,#ffff00,#00ff00,#00ffff,#0000ff,#ff00ff,#ff0000)"></div>
<div style="left:667.6px;top:127.3px;width:80.4px;height:80.4px;border-radius:50%;background:#373737"></div>
<svg style="left:657px;top:117px" width="102" height="102" viewBox="657 117 102 102">
<defs>
<linearGradient id="gw" gradientUnits="userSpaceOnUse" x1="688" y1="132.9" x2="688" y2="202.1"><stop offset="0" stop-color="#000"/><stop offset="1" stop-color="#fff"/></linearGradient>
<linearGradient id="gb" gradientUnits="userSpaceOnUse" x1="688" y1="167.5" x2="748" y2="167.5"><stop offset="0" stop-color="#e60000" stop-opacity="0"/><stop offset="1" stop-color="#e60000" stop-opacity="1"/></linearGradient>
</defs>
<path d="M748 167.5 L688 132.9 V202.1 Z" fill="url(#gw)"/>
<path d="M748 167.5 L688 132.9 V202.1 Z" fill="url(#gb)"/>
<circle cx="753" cy="167.6" r="3.1" fill="none" stroke="#fff" stroke-width="1.2"/>
<circle cx="687" cy="197.6" r="3.3" fill="#d8d8d8" stroke="#fff" stroke-width="0.9"/>
<circle cx="687" cy="197.6" r="3.9" fill="none" stroke="#555" stroke-width="0.4"/>
</svg>
<span class="t" style="left:622.6px;top:194px;font-size:7.4px;color:#bdbdbd;letter-spacing:-0.15px">H: 0</span>
<span class="t" style="left:622.6px;top:202.8px;font-size:7.4px;color:#bdbdbd;letter-spacing:-0.15px">S: 0</span>
<span class="t" style="left:622.6px;top:211.6px;font-size:7.4px;color:#bdbdbd;letter-spacing:-0.15px">L: 92</span>
<span class="t" style="left:751px;top:209.5px;font-size:7px;color:#bdbdbd">#:</span>
<div class="field" style="left:759px;top:210.4px;width:32.4px;height:11px;background:#262626"></div>
<span class="t" style="left:760.4px;top:209.8px;font-size:8.2px;color:#e8e8e8;transform:scaleX(0.8);transform-origin:0 50%">EBEBEB</span>
<span class="t" style="left:625px;top:224px;font-size:7px;color:#c6c6c6">不透明度</span>
<div style="left:643px;top:238.8px;width:99px;height:6px;border-radius:3px;background:linear-gradient(90deg,rgba(242,242,242,1) 0%,rgba(242,242,242,0.75) 30%,rgba(242,242,242,0.3) 70%,rgba(242,242,242,0) 100%),repeating-conic-gradient(#5c5c5c 0% 25%,#303030 0% 50%) 0 0/6px 6px"></div>
<svg style="left:627px;top:235px" width="122" height="14" viewBox="627 235 122 14">
<circle cx="633.3" cy="241.6" r="4.8" fill="#2c2c2c"/><circle cx="633.3" cy="241.6" r="4.1" fill="#f0f0f0"/>
<circle cx="742.2" cy="241.9" r="3.4" fill="#2a2a2a" stroke="#f0f0f0" stroke-width="1.1"/>
</svg>
<div class="field" style="left:750.8px;top:235px;width:28px;height:11.5px;background:#262626"></div>
<span class="t" style="left:753.6px;top:235.4px;font-size:8.2px;color:#e8e8e8;transform:scaleX(0.94);transform-origin:0 50%">100 %</span>
<div class="btn" style="left:779.8px;top:235px;width:9.2px;height:11.5px;background:#454545"></div>
<svg style="left:780.4px;top:238px" width="8" height="6" viewBox="0 0 8 6"><path d="M1.6 1.4 L4 3.7 L6.4 1.4" fill="none" stroke="#d8d8d8" stroke-width="0.9"/></svg>

<!-- layers panel -->
<div style="left:616px;top:254.5px;width:184px;height:18px;background:#2a2a2a"></div>
<div style="left:628.5px;top:255.5px;width:21.5px;height:17px;background:#373737"></div>
<div style="left:620.6px;top:260.7px;width:1.3px;height:5.6px;background:#525252"></div><div style="left:622.6px;top:260.7px;width:1.3px;height:5.6px;background:#525252"></div>
<span class="t" style="left:632px;top:257.3px;font-size:7.7px;color:#f2f2f2">图层</span>
<span class="t" style="left:653.5px;top:257.3px;font-size:7.7px;color:#cfcfcf">画笔</span>
<span class="t" style="left:675px;top:257.3px;font-size:7.7px;color:#cfcfcf">快速特效</span>
<span class="t" style="left:711.5px;top:257.3px;font-size:7.7px;color:#cfcfcf">样式</span>
<svg style="left:787px;top:259.9px" width="7" height="7" viewBox="0 0 7 7"><path d="M0 0.8 H7 M0 3.5 H7 M0 6.2 H7" stroke="#d0d0d0" stroke-width="1"/></svg>
<span class="t" style="left:621px;top:277.2px;font-size:6.9px;color:#c4c4c4">不透明度:</span>
<div class="field" style="left:653.5px;top:276.8px;width:36px;height:11.2px;background:#262626"></div>
<span class="t" style="left:656.5px;top:277.4px;font-size:8.2px;color:#ececec;transform:scaleX(0.95);transform-origin:0 50%">100 %</span>
<svg style="left:681px;top:279.6px" width="8" height="6" viewBox="0 0 8 6"><path d="M1.6 1.4 L4 3.7 L6.4 1.4" fill="none" stroke="#d8d8d8" stroke-width="0.9"/></svg>
<div class="btn" style="left:694px;top:276.8px;width:71.5px;height:11.2px;background:#474747"></div>
<span class="t" style="left:697px;top:277.4px;font-size:7.6px;color:#ececec">正常</span>
<svg style="left:756px;top:279.6px" width="8" height="6" viewBox="0 0 8 6"><path d="M1.6 1.4 L4 3.7 L6.4 1.4" fill="none" stroke="#d8d8d8" stroke-width="0.9"/></svg>
<svg style="left:770px;top:278.6px" width="7.8" height="7.8" viewBox="0 0 9 9"><circle cx="4.5" cy="4.5" r="2.2" fill="none" stroke="#9a9a9a" stroke-width="1.5"/><circle cx="7.60" cy="4.50" r="0.8" fill="#9a9a9a"/><circle cx="6.69" cy="6.69" r="0.8" fill="#9a9a9a"/><circle cx="4.50" cy="7.60" r="0.8" fill="#9a9a9a"/><circle cx="2.31" cy="6.69" r="0.8" fill="#9a9a9a"/><circle cx="1.40" cy="4.50" r="0.8" fill="#9a9a9a"/><circle cx="2.31" cy="2.31" r="0.8" fill="#9a9a9a"/><circle cx="4.50" cy="1.40" r="0.8" fill="#9a9a9a"/><circle cx="6.69" cy="2.31" r="0.8" fill="#9a9a9a"/></svg>
<div style="left:784px;top:277.2px;width:10.8px;height:10.6px;background:#2a2a2a;border-radius:1px"></div>
<svg style="left:785.9px;top:277.6px" width="7" height="9.6" viewBox="0 0 8 11"><path d="M2.2 5 V3.2 A1.8 1.8 0 0 1 5.8 3.2 V5" fill="none" stroke="#a6a6a6" stroke-width="1"/><rect x="0.8" y="4.8" width="6.4" height="5.2" rx="0.6" fill="#a6a6a6"/><circle cx="4" cy="7.4" r="0.8" fill="#2a2a2a"/></svg>
<div style="left:616px;top:291.5px;width:184px;height:39.5px;background:#282828"></div><div style="left:616px;top:292.4px;width:171.2px;height:26.6px;background:#161616"></div>
<div style="left:616.4px;top:293.3px;width:170px;height:24.8px;background:#4b6b95"></div>
<div style="left:627.2px;top:293.3px;width:0.8px;height:24.8px;background:#2f4565"></div>
<svg style="left:619px;top:302.2px" width="5.6" height="6.6" viewBox="0 0 6 7"><g fill="#c9d4e4"><rect x="0.3" y="0.2" width="1" height="1"/><rect x="2.5" y="0.2" width="1" height="1"/><rect x="4.7" y="0.2" width="1" height="1"/><rect x="1.4" y="1.6" width="1" height="1"/><rect x="3.6" y="1.6" width="1" height="1"/><rect x="0.3" y="3" width="1" height="1"/><rect x="2.5" y="3" width="1" height="1"/><rect x="4.7" y="3" width="1" height="1"/><rect x="1.4" y="4.4" width="1" height="1"/><rect x="3.6" y="4.4" width="1" height="1"/><rect x="0.3" y="5.8" width="1" height="1"/><rect x="2.5" y="5.8" width="1" height="1"/><rect x="4.7" y="5.8" width="1" height="1"/></g></svg>
<div style="left:628px;top:293.3px;width:24.3px;height:24.8px;background:#51739f"></div><div style="left:652.3px;top:293.3px;width:0.8px;height:24.8px;background:#2f4565"></div>
<div style="left:630px;top:295.2px;width:21px;height:21.2px;background:#262626"></div>
<svg style="left:630px;top:295.2px" width="21" height="21.2" viewBox="0 0 21 21.2"><g transform="translate(0 1.15) scale(0.1853) translate(-337.3 -257.6)"><g>
<path d="M368.5 258.8 L370.0 258.1 L371.8 258.6 L373.0 270.6 L372.1 271.5 L371.2 270.6 Z" fill="#e6202c" stroke="#e6202c" stroke-width="0.5" stroke-linejoin="round"/>
<path d="M370.0 275.1 L371.2 274.2 L372.4 274.9 L376.0 288.6 L377.2 291.6 L374.8 294.6 L373.3 291.0 Z" fill="#e6202c" stroke="#e6202c" stroke-width="0.5" stroke-linejoin="round"/>
<path d="M374.2 291.6 L377.2 291.0 L380.8 293.1 L386.2 293.1 L387.7 295.2 L389.4 291.0 L392.8 291.0 L394.0 294.6 L397.6 295.2 L402.4 296.4 L404.1 293.1 L405.7 291.0 L406.2 294.6 L404.7 297.0 L407.4 302.4 L411.9 305.1 L416.7 306.3 L416.7 307.8 L364.6 307.8 L364.9 304.2 L366.6 301.2 L370.0 298.2 L372.4 296.4 Z" fill="#e6202c" stroke="#e6202c" stroke-width="0.5" stroke-linejoin="round"/>
<ellipse cx="392.8" cy="262.0" rx="2.6" ry="2.6" fill="#e6202c"/>
<ellipse cx="402.0" cy="267.0" rx="2.0" ry="2.4" fill="#e6202c"/>
<ellipse cx="389.2" cy="280.4" rx="2.2" ry="2.2" fill="#e6202c"/>
<ellipse cx="391.6" cy="289.2" rx="2.8" ry="2.6" fill="#e6202c"/>
<path d="M351.0 294.0 L352.0 293.4 L355.0 295.8 L354.1 296.7 Z" fill="#e6202c" stroke="#e6202c" stroke-width="0.5" stroke-linejoin="round"/>
<path d="M366.6 292.4 L367.6 291.6 L371.4 294.8 L370.6 295.8 Z" fill="#e6202c" stroke="#e6202c" stroke-width="0.5" stroke-linejoin="round"/>
<path d="M347.4 304.8 L350.8 304.8 L351.0 306.0 L347.7 306.1 Z" fill="#e6202c" stroke="#e6202c" stroke-width="0.5" stroke-linejoin="round"/>
<path d="M385.1 267.0 L386.8 266.0 L388.2 267.0 L391.8 277.8 L391.0 279.0 L389.8 278.5 Z" fill="#62c02c" stroke="#62c02c" stroke-width="0.5" stroke-linejoin="round"/>
<ellipse cx="363.0" cy="275.4" rx="1.9" ry="2.5" fill="#62c02c"/>
<path d="M365.8 283.2 L367.0 282.3 L368.2 283.2 L374.8 295.2 L373.0 296.4 L371.4 295.2 Z" fill="#62c02c" stroke="#62c02c" stroke-width="0.5" stroke-linejoin="round"/>
<ellipse cx="391.0" cy="284.1" rx="2.6" ry="2.8" fill="#62c02c"/>
<path d="M374.8 296.7 L379.6 298.9 L386.2 298.2 L387.0 294.6 L388.6 292.4 L390.4 291.7 L392.3 292.4 L393.0 296.4 L400.0 298.2 L403.5 297.0 L407.1 303.0 L411.3 305.4 L416.7 306.8 L416.7 308.4 L371.4 308.4 L374.2 303.0 Z" fill="#62c02c" stroke="#62c02c" stroke-width="0.5" stroke-linejoin="round"/>
<path d="M357.0 297.6 L358.0 296.7 L363.7 299.6 L362.8 300.8 Z" fill="#62c02c" stroke="#62c02c" stroke-width="0.5" stroke-linejoin="round"/>
<path d="M351.0 301.5 L352.0 300.8 L355.0 302.0 L354.1 303.2 Z" fill="#62c02c" stroke="#62c02c" stroke-width="0.5" stroke-linejoin="round"/>
<path d="M361.6 302.7 L362.8 302.0 L365.8 303.2 L365.2 304.4 Z" fill="#62c02c" stroke="#62c02c" stroke-width="0.5" stroke-linejoin="round"/>
<path d="M365.7 328.6 L380.0 327.7 L398.0 327.5 L416.0 328.6 L421.2 332.5 L425.0 336.2 L424.7 339.7 L420.5 340.7 L416.0 339.2 L407.0 340.7 L398.7 344.5 L395.0 346.0 L384.5 346.3 L377.0 345.7 L372.5 344.5 L369.2 340.7 L365.0 338.8 L359.0 341.2 L351.5 343.3 L353.0 340.7 L357.5 337.0 L362.0 332.5 Z" fill="#62c02c" stroke="#62c02c" stroke-width="0.5" stroke-linejoin="round"/>
<path d="M400.4 344.5 L401.9 344.2 L404.3 353.2 L403.1 353.5 Z" fill="#62c02c" stroke="#62c02c" stroke-width="0.5" stroke-linejoin="round"/>
<path d="M375.8 346.0 L376.7 346.9 L372.2 350.2 L371.6 349.6 Z" fill="#62c02c" stroke="#62c02c" stroke-width="0.5" stroke-linejoin="round"/>
<path d="M395.7 346.0 L396.8 346.0 L396.2 349.0 L395.3 349.0 Z" fill="#62c02c" stroke="#62c02c" stroke-width="0.5" stroke-linejoin="round"/>
<ellipse cx="343.2" cy="342.5" rx="1.6" ry="1.5" fill="#62c02c"/>
<ellipse cx="347.7" cy="346.0" rx="1.2" ry="1.2" fill="#62c02c"/>
<ellipse cx="350.0" cy="341.5" rx="1.9" ry="1.6" fill="#62c02c"/>
<ellipse cx="341.7" cy="344.5" rx="1.0" ry="1.0" fill="#62c02c"/>
<ellipse cx="407.7" cy="347.5" rx="1.0" ry="1.0" fill="#62c02c"/>
<ellipse cx="416.9" cy="355.3" rx="2.4" ry="2.2" fill="#62c02c"/>
<ellipse cx="425.4" cy="337.0" rx="1.2" ry="1.2" fill="#62c02c"/>
<ellipse cx="429.5" cy="333.2" rx="1.0" ry="0.9" fill="#62c02c"/>
<ellipse cx="426.8" cy="334.4" rx="0.9" ry="0.9" fill="#62c02c"/>
<path d="M354.5 331.3 L364.2 329.2 L365.0 331.3 L359.7 334.0 L356.0 334.7 L357.5 332.5 Z" fill="#e6202c" stroke="#e6202c" stroke-width="0.5" stroke-linejoin="round"/>
<path d="M350.0 332.8 L353.7 331.9 L354.0 333.1 L350.4 334.0 Z" fill="#e6202c" stroke="#e6202c" stroke-width="0.5" stroke-linejoin="round"/>
<ellipse cx="403.2" cy="355.7" rx="2.5" ry="2.5" fill="#e6202c"/>
<ellipse cx="415.2" cy="340.7" rx="1.8" ry="1.5" fill="#e6202c"/>
<ellipse cx="397.2" cy="349.3" rx="0.9" ry="1.0" fill="#e6202c"/>
<ellipse cx="422.7" cy="333.4" rx="1.0" ry="0.9" fill="#e6202c"/>
<ellipse cx="394.2" cy="349.0" rx="0.6" ry="1.2" fill="#e6202c"/>
<path d="M337 305 Q394 309.6 451 304.4 L451 331.2 Q394 325 337 330.4 Z" fill="#fff" opacity="0.06"/>
<path d="M337 304.8 Q394 309.8 451 304.2 L451 304.9 Q394 311.4 337 305.5 Z" fill="#62c02c"/>
<path d="M337 330.2 Q394 324.6 451 331 L451 331.7 Q394 326.8 337 330.9 Z" fill="#62c02c"/>
</g><text x="0" y="0" font-family="'Liberation Sans','Noto Sans CJK SC',sans-serif" font-weight="700" font-size="11.8" fill="#e6202c" transform="translate(339.8 323.2) rotate(1.5) skewX(-8)" style="letter-spacing:0.2px">小刀娱乐</text>
<text x="0" y="0" font-family="'Liberation Sans','Noto Sans CJK SC',sans-serif" font-weight="700" font-size="12" fill="#62c02c" transform="translate(395.6 324.6) rotate(-4.6) skewX(-8)" style="letter-spacing:0.3px">乐于分享</text></g></svg>
<span class="t" style="left:656px;top:300.4px;font-size:7.8px;color:#f4f4f4">背景</span>
<svg style="left:760.5px;top:301px" width="7" height="10" viewBox="0 0 7 10"><path d="M1.4 4.6 V2.8 A1.7 1.7 0 0 1 4.8 2.6" fill="none" stroke="#a9b7cb" stroke-width="0.9"/><rect x="0.4" y="4.4" width="6" height="4.8" rx="0.6" fill="#a9b7cb"/></svg>
<svg style="left:772px;top:301.6px" width="8" height="8" viewBox="0 0 8 8"><circle cx="4" cy="4.2" r="2.9" fill="#b5b5b5"/></svg>
<div class="btn" style="left:619.6px;top:332.8px;width:12.4px;height:12.4px;background:#2d2d2d"></div>
<svg style="left:619.5px;top:332.6px" width="13" height="13" viewBox="0 0 13 13"><rect x="4.4" y="4.6" width="5.8" height="5.8" rx="1.2" fill="#9c9c9c" stroke="#9c9c9c" stroke-width="0.6"/><rect x="2.4" y="2.6" width="5.8" height="5.8" rx="1.2" fill="#2d2d2d" stroke="#b4b4b4" stroke-width="0.8"/></svg>
<svg style="left:686.5px;top:334.8px" width="11" height="9" viewBox="0 0 11 9"><rect x="0.4" y="0.6" width="10.2" height="7.8" rx="0.6" fill="#aeaeae"/><circle cx="5.5" cy="4.5" r="2.6" fill="#373737"/></svg>
<svg style="left:700.5px;top:334.2px" width="11" height="11" viewBox="0 0 11 11"><circle cx="5.5" cy="5.4" r="4.4" fill="none" stroke="#aeaeae" stroke-width="0.8"/><path d="M5.5 8.4 A3 3 0 0 0 8.5 5.4 A3 3 0 0 0 7.6 3.3 Z" fill="#aeaeae"/><path d="M2.6 7.6 L8 2.6" stroke="#aeaeae" stroke-width="0.5"/></svg>
<span class="t" style="left:715.2px;top:334.2px;font-size:7px;font-weight:bold;color:#aeaeae;letter-spacing:-0.4px;transform:scaleX(0.85);transform-origin:0 0">FX</span>
<div style="left:715px;top:334.4px;width:8px;height:0.7px;background:#aeaeae"></div>
<svg style="left:727.5px;top:334.4px" width="11" height="10" viewBox="0 0 11 10"><path d="M3 0.6 H8 L10.4 9.4 H0.6 Z" fill="none" stroke="#aeaeae" stroke-width="0.8"/><path d="M2.3 3.4 H8.7 M1.5 6.4 H9.5 M4.7 0.6 L3.8 9.4 M6.3 0.6 L7.2 9.4" stroke="#aeaeae" stroke-width="0.7"/></svg>
<svg style="left:758px;top:334px" width="10" height="11" viewBox="0 0 10 11"><path d="M0.9 0.8 H6 M0.9 0.8 V10.2 H7.4 V3.6" fill="none" stroke="#aeaeae" stroke-width="0.8"/><path d="M2.4 4.2 H5.8 M2.4 6 H5.8 M2.4 7.8 H5.8" stroke="#aeaeae" stroke-width="0.6"/><path d="M7.6 0.2 V3 M6.2 1.6 H9" stroke="#aeaeae" stroke-width="0.8"/></svg>
<svg style="left:772px;top:334px" width="9" height="11" viewBox="0 0 9 11"><rect x="0.9" y="0.8" width="7" height="9.4" fill="none" stroke="#aeaeae" stroke-width="0.8"/><path d="M2.6 3.2 L6.2 7.8 M6.2 3.2 L2.6 7.8" stroke="#aeaeae" stroke-width="0.7"/></svg>
<svg style="left:785.5px;top:333.6px" width="9" height="12" viewBox="0 0 9 12"><path d="M0.6 2.4 H8.4 M3 2.2 V0.8 H6 V2.2" fill="none" stroke="#aeaeae" stroke-width="0.8"/><path d="M1.4 3.6 V10 A1 1 0 0 0 2.4 11 H6.6 A1 1 0 0 0 7.6 10 V3.6" fill="none" stroke="#aeaeae" stroke-width="0.8"/><path d="M3.3 4.6 V9.4 M5.7 4.6 V9.4" stroke="#aeaeae" stroke-width="0.7"/></svg>

<!-- transform panel -->
<div style="left:616px;top:349.4px;width:184px;height:19px;background:#2a2a2a"></div>
<div style="left:628.5px;top:350.4px;width:21.5px;height:18px;background:#373737"></div>
<div style="left:620.6px;top:356.09999999999997px;width:1.3px;height:5.6px;background:#525252"></div><div style="left:622.6px;top:356.09999999999997px;width:1.3px;height:5.6px;background:#525252"></div>
<span class="t" style="left:632px;top:352.7px;font-size:7.7px;color:#f2f2f2">变换</span>
<span class="t" style="left:653.5px;top:352.7px;font-size:7.7px;color:#cfcfcf">导航器</span>
<span class="t" style="left:683px;top:352.7px;font-size:7.7px;color:#cfcfcf">历史记录</span>
<svg style="left:787px;top:355.29999999999995px" width="7" height="7" viewBox="0 0 7 7"><path d="M0 0.8 H7 M0 3.5 H7 M0 6.2 H7" stroke="#d0d0d0" stroke-width="1"/></svg>
<span class="t" style="left:663px;top:378.8px;font-size:7.7px;color:#808080">X:</span>
<div class="field" style="left:673.2px;top:377.5px;width:43.8px;height:12.8px;background:#2d2d2d"></div>
<span class="t" style="left:677.5px;top:378.8px;font-size:8px;color:#b4b4b4">19 px</span>
<span class="t" style="left:725px;top:378.8px;font-size:7.7px;color:#808080">W:</span>
<div class="field" style="left:737px;top:377.5px;width:44px;height:12.8px;background:#2d2d2d"></div>
<span class="t" style="left:741.3px;top:378.8px;font-size:8px;color:#b4b4b4">112 px</span>
<span class="t" style="left:663px;top:395.1px;font-size:7.7px;color:#808080">Y:</span>
<div class="field" style="left:673.2px;top:393.9px;width:43.8px;height:12.8px;background:#2d2d2d"></div>
<span class="t" style="left:677.5px;top:395.1px;font-size:8px;color:#b4b4b4">0 px</span>
<span class="t" style="left:727px;top:395.1px;font-size:7.7px;color:#808080">H:</span>
<div class="field" style="left:737px;top:393.9px;width:44px;height:12.8px;background:#2d2d2d"></div>
<span class="t" style="left:741.3px;top:395.1px;font-size:8px;color:#b4b4b4">100 px</span>
<span class="t" style="left:663.4px;top:415.6px;font-size:7.7px;color:#808080">R:</span>
<div class="field" style="left:673.2px;top:414.3px;width:43.8px;height:12.8px;background:#2d2d2d"></div>
<span class="t" style="left:677.5px;top:415.6px;font-size:8px;color:#b4b4b4">0 °</span>
<span class="t" style="left:727px;top:415.6px;font-size:7.7px;color:#808080">S:</span>
<div class="field" style="left:737px;top:414.3px;width:44px;height:12.8px;background:#2d2d2d"></div>
<span class="t" style="left:741.3px;top:415.6px;font-size:8px;color:#b4b4b4">0 °</span>
<svg style="left:708.5px;top:417.8px" width="8" height="6" viewBox="0 0 8 6"><path d="M1.6 1.4 L4 3.7 L6.4 1.4" fill="none" stroke="#c8c8c8" stroke-width="0.9"/></svg>
<svg style="left:772.5px;top:417.8px" width="8" height="6" viewBox="0 0 8 6"><path d="M1.6 1.4 L4 3.7 L6.4 1.4" fill="none" stroke="#c8c8c8" stroke-width="0.9"/></svg>
<svg style="left:627.3px;top:391.7px" width="25" height="25" viewBox="0 0 25 25"><rect x="1.6" y="1.6" width="21.8" height="21.8" fill="#6b6b6b"/><rect x="0" y="0" width="4.2" height="4.2" fill="#6b6b6b"/><rect x="10.4" y="0" width="4.2" height="4.2" fill="#6b6b6b"/><rect x="20.8" y="0" width="4.2" height="4.2" fill="#6b6b6b"/><rect x="0" y="10.4" width="4.2" height="4.2" fill="#6b6b6b"/><rect x="20.8" y="10.4" width="4.2" height="4.2" fill="#6b6b6b"/><rect x="0" y="20.8" width="4.2" height="4.2" fill="#6b6b6b"/><rect x="10.4" y="20.8" width="4.2" height="4.2" fill="#6b6b6b"/><rect x="20.8" y="20.8" width="4.2" height="4.2" fill="#6b6b6b"/></svg>
<svg style="left:787.6px;top:384.8px" width="7" height="15" viewBox="0 0 7 15"><rect x="1.1" y="0.6" width="4.4" height="5.6" rx="1.1" fill="none" stroke="#d4d4d4" stroke-width="0.8"/><rect x="1.1" y="8.4" width="4.4" height="5.6" rx="1.1" fill="none" stroke="#d4d4d4" stroke-width="0.8"/><path d="M3.3 3.8 V10.8" stroke="#373737" stroke-width="2"/><path d="M3.3 4.4 V10.2" stroke="#d4d4d4" stroke-width="0.8"/></svg>
<div class="btn" style="left:750.5px;top:433px;width:20.8px;height:17.6px;background:#434343"></div>
<svg style="left:750.8px;top:432.8px" width="20.4" height="17.4" viewBox="0 0 20.4 17.4"><rect x="5.2" y="4" width="10" height="9.4" fill="none" stroke="#727272" stroke-width="0.8" stroke-dasharray="3.2 1.6"/><rect x="5.2" y="8.8" width="5.2" height="4.8" rx="1" fill="#727272"/></svg>
<div class="btn" style="left:772.2px;top:433px;width:8.8px;height:17.6px;background:#434343"></div>
<svg style="left:772.6px;top:438.6px" width="8" height="6" viewBox="0 0 8 6"><path d="M1.6 1.4 L4 3.7 L6.4 1.4" fill="none" stroke="#e0e0e0" stroke-width="1"/></svg>
<!-- status bar -->
<span class="t" style="left:15.5px;top:460.2px;color:#d0d0d0;font-size:7.97px">选取项已锁定，无法移动。解锁选取项对其进行变换。</span>

<svg style="left:791px;top:465.6px" width="6" height="6" viewBox="0 0 7 7"><g fill="#7a7a7a"><rect x="5" y="0.5" width="1" height="1"/><rect x="3" y="2.6" width="1" height="1"/><rect x="5" y="2.6" width="1" height="1"/><rect x="1" y="4.7" width="1" height="1"/><rect x="3" y="4.7" width="1" height="1"/><rect x="5" y="4.7" width="1" height="1"/></g></svg>
</div>
</body>
</html>
